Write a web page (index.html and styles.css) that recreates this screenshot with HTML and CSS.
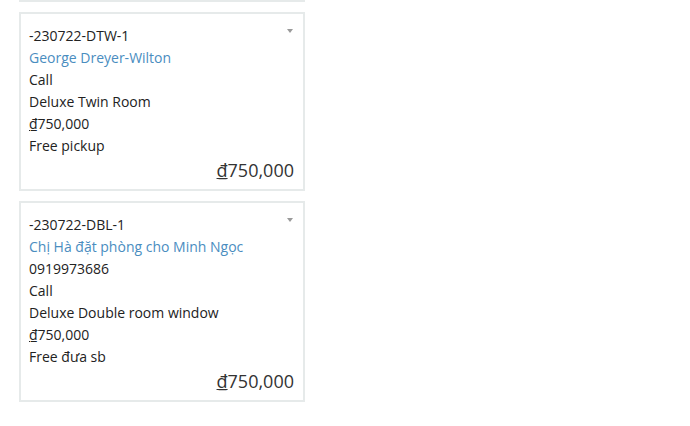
FILE: index.html
```html
<!DOCTYPE html>
<html>
<head>
<meta charset="utf-8">
<link rel="stylesheet" href="styles.css">
</head>
<body>
<div class="column">
  <div class="card prev"></div>
  <div class="card">
    <span class="caret"></span>
    <div class="line">-230722-DTW-1</div>
    <div class="line name">George Dreyer-Wilton</div>
    <div class="line">Call</div>
    <div class="line">Deluxe Twin Room</div>
    <div class="line"><span class="cur">₫</span>750,000</div>
    <div class="line">Free pickup</div>
    <div class="total"><span class="cur">₫</span>750,000</div>
  </div>
  <div class="card">
    <span class="caret"></span>
    <div class="line">-230722-DBL-1</div>
    <div class="line name">Chị Hà đặt phòng cho Minh Ngọc</div>
    <div class="line">0919973686</div>
    <div class="line">Call</div>
    <div class="line">Deluxe Double room window</div>
    <div class="line"><span class="cur">₫</span>750,000</div>
    <div class="line">Free đưa sb</div>
    <div class="total"><span class="cur">₫</span>750,000</div>
  </div>
</div>
</body>
</html>
```
FILE: styles.css
```css
html, body {
  margin: 0;
  padding: 0;
  background: #ffffff;
}
body {
  font-family: "Open Sans", "Noto Sans", sans-serif;
  font-size: 14px;
  color: #222222;
}
.column {
  display: flex;
  flex-direction: column;
  gap: 10px;
  width: 286px;
  padding-left: 19px;
}
.card {
  position: relative;
  box-sizing: border-box;
  border: 2px solid #e6eaea;
  padding: 11px 9px 6px 8px;
}
.card.prev {
  height: 60px;
  margin-top: -58px;
}
.line {
  line-height: 22px;
  white-space: nowrap;
}
.name {
  color: #4a8dbf;
}
.total {
  text-align: right;
  font-size: 18px;
  line-height: 26px;
  color: #333333;
}
.cur {
  text-decoration: underline;
  text-underline-offset: 1px;
  text-decoration-thickness: 1px;
}
.caret {
  position: absolute;
  top: 15px;
  right: 10px;
  width: 0;
  height: 0;
  border-left: 3.5px solid transparent;
  border-right: 3.5px solid transparent;
  border-top: 4px solid #9a9a9a;
}
```
